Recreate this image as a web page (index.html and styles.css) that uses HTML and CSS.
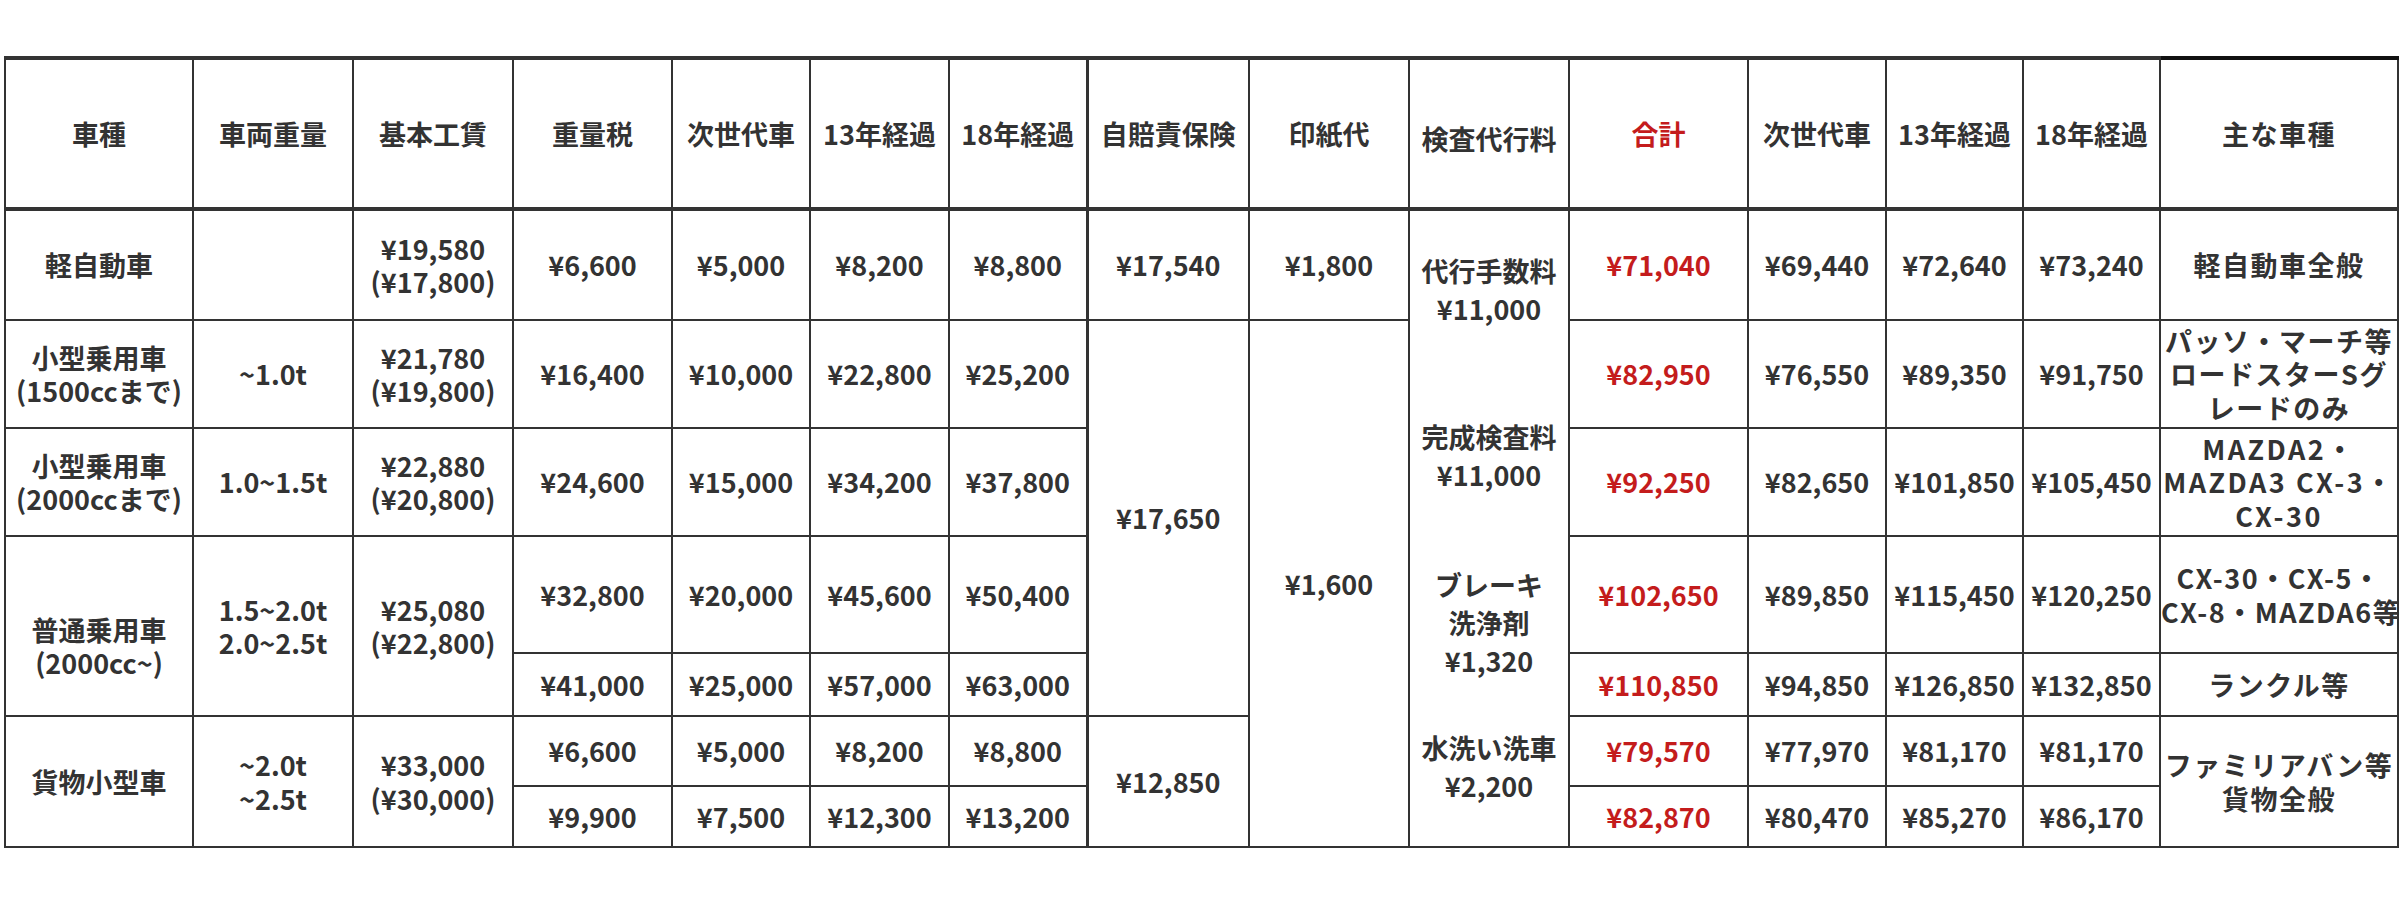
FILE: index.html
```html
<!DOCTYPE html>
<html lang="ja">
<head>
<meta charset="utf-8">
<title>車検費用</title>
<link rel="stylesheet" href="styles.css">
</head>
<body>
<div class="page">
<table class="price-table">
  <colgroup>
    <col class="w-type"><col class="w-weight"><col class="w-base"><col class="w-tax">
    <col class="w-next"><col class="w-13"><col class="w-18">
    <col class="w-ins"><col class="w-stamp"><col class="w-fee">
    <col class="w-total"><col class="w-next2"><col class="w-13b"><col class="w-18b">
    <col class="w-models">
  </colgroup>
  <thead>
    <tr class="r-head">
      <th>車種</th><th>車両重量</th><th>基本工賃</th><th>重量税</th><th>次世代車</th><th>13年経過</th><th>18年経過</th>
      <th class="sep">自賠責保険</th><th>印紙代</th><th class="fee-head">検査代行料</th>
      <th class="total">合計</th><th>次世代車</th><th>13年経過</th><th>18年経過</th><th class="models models-head">主な車種</th>
    </tr>
  </thead>
  <tbody>
    <tr class="r1">
      <td>軽自動車</td><td></td><td>¥19,580<br>(¥17,800)</td><td>¥6,600</td><td>¥5,000</td><td>¥8,200</td><td>¥8,800</td>
      <td class="sep">¥17,540</td><td>¥1,800</td>
      <td class="fee" rowspan="7">
        <div class="fee-block">代行手数料<br>¥11,000</div>
        <div class="fee-block gap-1">完成検査料<br>¥11,000</div>
        <div class="fee-block gap-2">ブレーキ<br>洗浄剤<br>¥1,320</div>
        <div class="fee-block gap-3">水洗い洗車<br>¥2,200</div>
      </td>
      <td class="total">¥71,040</td><td>¥69,440</td><td>¥72,640</td><td>¥73,240</td><td class="models">軽自動車全般</td>
    </tr>
    <tr class="r2">
      <td>小型乗用車<br>(1500ccまで)</td><td>~1.0t</td><td>¥21,780<br>(¥19,800)</td><td>¥16,400</td><td>¥10,000</td><td>¥22,800</td><td>¥25,200</td>
      <td class="sep" rowspan="4">¥17,650</td><td rowspan="6">¥1,600</td>
      <td class="total">¥82,950</td><td>¥76,550</td><td>¥89,350</td><td>¥91,750</td><td class="models">パッソ・マーチ等<br>ロードスターSグ<br>レードのみ</td>
    </tr>
    <tr class="r3">
      <td>小型乗用車<br>(2000ccまで)</td><td>1.0~1.5t</td><td>¥22,880<br>(¥20,800)</td><td>¥24,600</td><td>¥15,000</td><td>¥34,200</td><td>¥37,800</td>
      <td class="total">¥92,250</td><td>¥82,650</td><td>¥101,850</td><td>¥105,450</td><td class="models latin">MAZDA2・<br>MAZDA3 CX-3・<br>CX-30</td>
    </tr>
    <tr class="r4a">
      <td rowspan="2" class="low">普通乗用車<br>(2000cc~)</td><td rowspan="2">1.5~2.0t<br>2.0~2.5t</td><td rowspan="2">¥25,080<br>(¥22,800)</td>
      <td>¥32,800</td><td>¥20,000</td><td>¥45,600</td><td>¥50,400</td>
      <td class="total">¥102,650</td><td>¥89,850</td><td>¥115,450</td><td>¥120,250</td><td class="models">CX-30・CX-5・<br>CX-8・MAZDA6等</td>
    </tr>
    <tr class="r4b">
      <td>¥41,000</td><td>¥25,000</td><td>¥57,000</td><td>¥63,000</td>
      <td class="total">¥110,850</td><td>¥94,850</td><td>¥126,850</td><td>¥132,850</td><td class="models">ランクル等</td>
    </tr>
    <tr class="r5a">
      <td rowspan="2">貨物小型車</td><td rowspan="2">~2.0t<br>~2.5t</td><td rowspan="2">¥33,000<br>(¥30,000)</td>
      <td>¥6,600</td><td>¥5,000</td><td>¥8,200</td><td>¥8,800</td>
      <td class="sep" rowspan="2">¥12,850</td>
      <td class="total">¥79,570</td><td>¥77,970</td><td>¥81,170</td><td>¥81,170</td><td class="models" rowspan="2">ファミリアバン等<br>貨物全般</td>
    </tr>
    <tr class="r5b">
      <td>¥9,900</td><td>¥7,500</td><td>¥12,300</td><td>¥13,200</td>
      <td class="total">¥82,870</td><td>¥80,470</td><td>¥85,270</td><td>¥86,170</td>
    </tr>
  </tbody>
</table>
</div>
</body>
</html>
```
FILE: styles.css
```css
html, body {
  margin: 0;
  background: #ffffff;
}

body {
  font-family: "Noto Sans CJK JP", "Noto Sans", sans-serif;
  color: #333333;
}

.page {
  padding: 56px 0 0 4px;
}

.price-table {
  border-collapse: collapse;
  table-layout: fixed;
  width: 2394px;
  font-size: 27px;
  font-weight: 700;
  line-height: 1.24;
}

.price-table th,
.price-table td {
  border: 2px solid #333333;
  text-align: center;
  vertical-align: middle;
  padding: 0 2px;
  white-space: nowrap;
}

.price-table thead th {
  border-top: 4px solid #333333;
  border-bottom: 4px solid #333333;
  font-weight: 700;
}

.price-table thead th.models-head {
  border-top: 4px solid #111111;
}

.price-table .sep {
  border-left: 3px solid #333333;
}

.price-table .total {
  color: #c41c1c;
}

.price-table .models {
  letter-spacing: 1.5px;
  padding: 0;
}

.price-table .models.latin {
  letter-spacing: 2.5px;
}

.price-table .fee-head {
  padding-top: 10px;
}

.price-table .low {
  padding-top: 40px;
}

.fee {
  line-height: 38px;
}

.fee-block.gap-1 { margin-top: 90px; }
.fee-block.gap-2 { margin-top: 72px; }
.fee-block.gap-3 { margin-top: 49px; }

.w-type { width: 188px; }
.w-weight { width: 160px; }
.w-base { width: 160px; }
.w-tax { width: 159px; }
.w-next { width: 138px; }
.w-13 { width: 139px; }
.w-18 { width: 138px; }
.w-ins { width: 162px; }
.w-stamp { width: 160px; }
.w-fee { width: 160px; }
.w-total { width: 179px; }
.w-next2 { width: 138px; }
.w-13b { width: 137px; }
.w-18b { width: 137px; }
.w-models { width: 238px; }

.r-head { height: 151px; }
.r1 { height: 111px; }
.r2 { height: 108px; }
.r3 { height: 108px; }
.r4a { height: 117px; }
.r4b { height: 63px; }
.r5a { height: 70px; }
.r5b { height: 61px; }
```
